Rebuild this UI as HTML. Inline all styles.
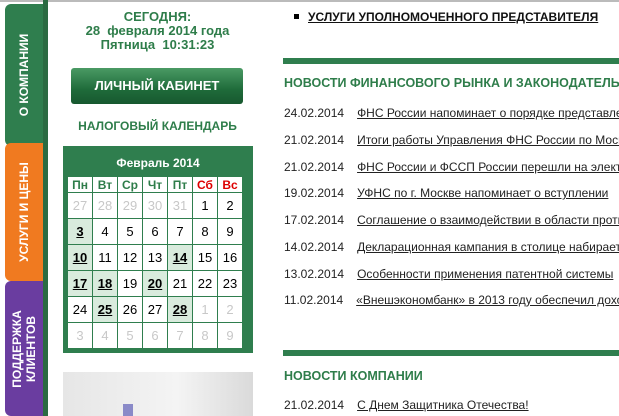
<!DOCTYPE html>
<html style="overflow:hidden"><head><meta charset="utf-8"><style>
html,body{overflow:hidden}
body{margin:0;width:619px;height:416px;background:#fff;font-family:"Liberation Sans",sans-serif;position:relative}
.a{position:absolute}
.tab{position:absolute;left:5px;width:38px;border-radius:6px 0 0 6px;color:#fff;font-weight:bold;font-size:12px}
.tab span{position:absolute;left:50%;top:50%;transform:translate(-50%,-50%) rotate(-90deg);white-space:nowrap;text-align:center;line-height:14px}
.g{color:#2e7d4a;font-weight:bold;text-align:center}
table{border-collapse:collapse}
.cal td{width:24px;height:25px;border:1px solid #2f7e4e;text-align:center;font-size:13px;background:#fff;padding:0}
.cal tr.h td{height:15px;font-weight:bold;color:#2e7d4a;font-size:12px}
.cal .o{color:#c8c8c8}.cal .m{background:#d9ebdd;font-weight:bold;text-decoration:underline}
.n{position:absolute;left:284px;font-size:12px;color:#222;white-space:nowrap;width:335px;overflow:hidden}
.n u{margin-left:13px}
.bar{position:absolute;left:283px;width:336px;height:6px;background:#2f7e4e}
.h2{position:absolute;left:284px;font-size:12.5px;font-weight:bold;color:#2e7d4a;white-space:nowrap;width:335px;overflow:hidden}
</style></head><body>
<div class="a" style="left:0;top:0;width:619px;height:2px;background:#bbb"></div>
<div class="tab" style="top:4px;height:142px;background:#2f7e4e"><span>О КОМПАНИИ</span></div>
<div class="tab" style="top:143px;height:138px;background:#f07a20"><span>УСЛУГИ И ЦЕНЫ</span></div>
<div class="tab" style="top:281px;height:135px;background:#6a3da0"><span>ПОДДЕРЖКА<br>КЛИЕНТОВ</span></div>
<div class="a" style="left:43px;top:0;width:5px;height:416px;background:#2b6b42"></div>
<div class="a g" style="left:60px;top:10px;width:195px;font-size:13px;line-height:14px">СЕГОДНЯ:<br>28&nbsp; февраля 2014 года<br>Пятница&nbsp; 10:31:23</div>
<div class="a" style="left:71px;top:68px;width:172px;height:36px;border-radius:3px;background:linear-gradient(#4a9a64,#1f6b3a 60%,#17582f);color:#fff;font-size:13px;font-weight:bold;text-align:center;line-height:36px">ЛИЧНЫЙ КАБИНЕТ</div>
<div class="a g" style="left:60px;top:119px;width:195px;font-size:12px">НАЛОГОВЫЙ КАЛЕНДАРЬ</div>
<div class="a" style="left:63px;top:146px;width:190px;height:207px;background:#2f7e4e">
<div style="color:#fff;font-weight:bold;font-size:12px;text-align:center;margin-top:10px;height:20px">Февраль 2014</div>
<table class="cal" style="margin-left:4px">
<tr class="h"><td>Пн</td><td>Вт</td><td>Ср</td><td>Чт</td><td>Пт</td><td style="color:#d00">Сб</td><td style="color:#d00">Вс</td></tr>
<tr><td class="o">27</td><td class="o">28</td><td class="o">29</td><td class="o">30</td><td class="o">31</td><td>1</td><td>2</td></tr>
<tr><td class="m">3</td><td>4</td><td>5</td><td>6</td><td>7</td><td>8</td><td>9</td></tr>
<tr><td class="m">10</td><td>11</td><td>12</td><td>13</td><td class="m">14</td><td>15</td><td>16</td></tr>
<tr><td class="m">17</td><td class="m">18</td><td>19</td><td class="m">20</td><td>21</td><td>22</td><td>23</td></tr>
<tr><td>24</td><td class="m">25</td><td>26</td><td>27</td><td class="m">28</td><td class="o">1</td><td class="o">2</td></tr>
<tr><td class="o">3</td><td class="o">4</td><td class="o">5</td><td class="o">6</td><td class="o">7</td><td class="o">8</td><td class="o">9</td></tr>
</table></div>
<div class="a" style="left:63px;top:372px;width:190px;height:44px;background:linear-gradient(90deg,#e6e6e6,#f4f4f4 60%,#dadada)"><div class="a" style="left:60px;top:32px;width:10px;height:12px;background:#8a8ac8"></div></div>
<div class="a" style="left:294px;top:14px;width:5px;height:5px;background:#000"></div>
<div class="a" style="left:308px;top:10px;font-size:12px;font-weight:bold;text-decoration:underline;color:#111">УСЛУГИ УПОЛНОМОЧЕННОГО ПРЕДСТАВИТЕЛЯ</div>
<div class="bar" style="top:58px"></div>
<div class="h2" style="top:76px">НОВОСТИ ФИНАНСОВОГО РЫНКА И ЗАКОНОДАТЕЛЬСТВА</div>
<div class="n" style="top:106px">24.02.2014<u>ФНС России напоминает о порядке представления</u></div>
<div class="n" style="top:133px">21.02.2014<u>Итоги работы Управления ФНС России по Москве</u></div>
<div class="n" style="top:160px">21.02.2014<u>ФНС России и ФССП России перешли на электронный</u></div>
<div class="n" style="top:186px">19.02.2014<u>УФНС по г. Москве напоминает о вступлении</u></div>
<div class="n" style="top:213px">17.02.2014<u>Соглашение о взаимодействии в области противодействия</u></div>
<div class="n" style="top:240px">14.02.2014<u>Декларационная кампания в столице набирает</u></div>
<div class="n" style="top:267px">13.02.2014<u>Особенности применения патентной системы</u></div>
<div class="n" style="top:293px">11.02.2014<u>«Внешэкономбанк» в 2013 году обеспечил доходность</u></div>
<div class="bar" style="top:350px"></div>
<div class="h2" style="top:369px">НОВОСТИ КОМПАНИИ</div>
<div class="n" style="top:398px">21.02.2014<u>С Днем Защитника Отечества!</u></div>
</body></html>
